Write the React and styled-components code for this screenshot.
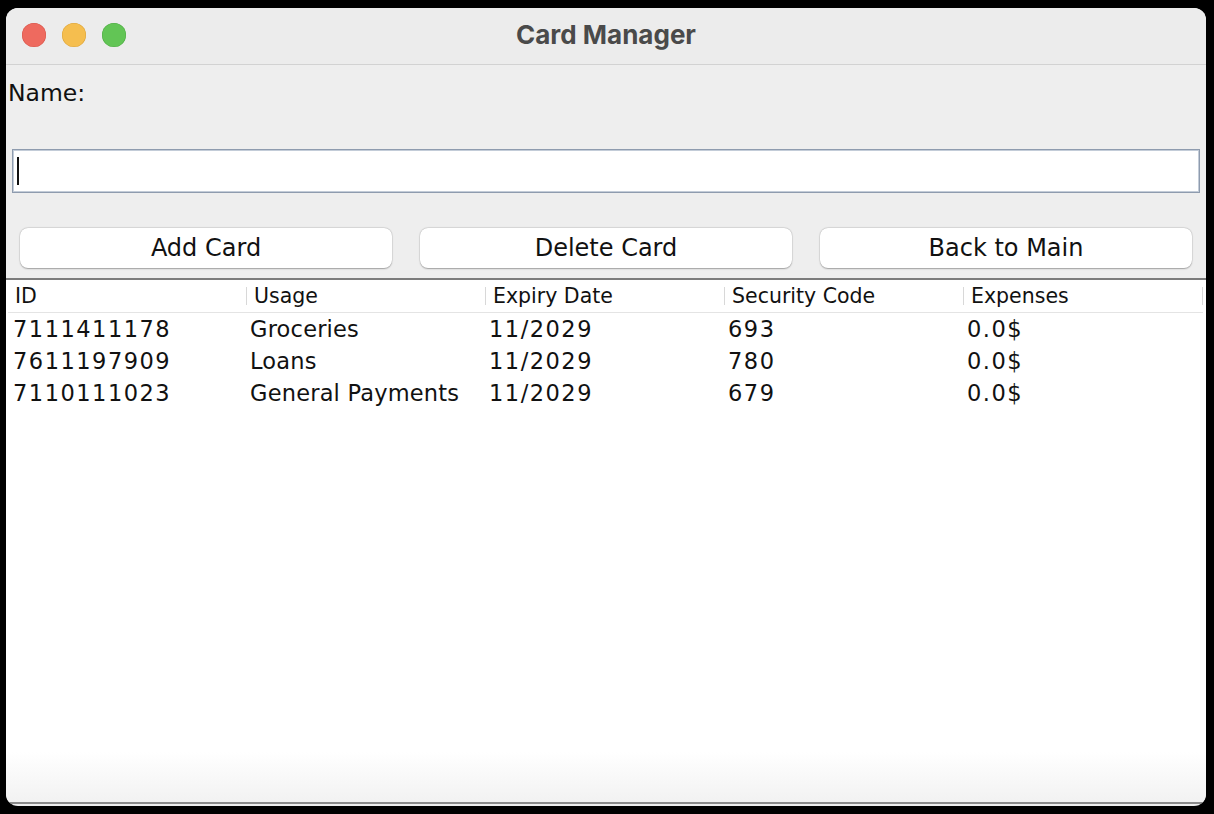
import React from 'react'
import styled, { createGlobalStyle } from 'styled-components'

const cards = [
  { id: '7111411178', usage: 'Groceries', expiry: '11/2029', code: '693', expenses: '0.0$' },
  { id: '7611197909', usage: 'Loans', expiry: '11/2029', code: '780', expenses: '0.0$' },
  { id: '7110111023', usage: 'General Payments', expiry: '11/2029', code: '679', expenses: '0.0$' },
]

const columns = ['ID', 'Usage', 'Expiry Date', 'Security Code', 'Expenses']

function App() {
  return (
    <>
      <Global />
      <Window>
        <TitleBar>
          <Lights>
            <Light color='#ee6a5f' edge='#d5554a' />
            <Light color='#f5be4f' edge='#d9a23a' />
            <Light color='#62c555' edge='#4ea943' />
          </Lights>
          <Title>Card Manager</Title>
          <span />
        </TitleBar>
        <Form>
          <Label>Name:</Label>
          <Field>
            <Caret />
          </Field>
          <Buttons>
            <Button>Add Card</Button>
            <Button>Delete Card</Button>
            <Button>Back to Main</Button>
          </Buttons>
        </Form>
        <Pane>
          <Table>
            <thead>
              <tr>
                {columns.map(c => (
                  <Head key={c}>{c}</Head>
                ))}
              </tr>
            </thead>
            <tbody>
              {cards.map(c => (
                <tr key={c.id}>
                  <Cell first numeric>{c.id}</Cell>
                  <Cell>{c.usage}</Cell>
                  <Cell numeric>{c.expiry}</Cell>
                  <Cell numeric>{c.code}</Cell>
                  <Cell numeric>{c.expenses}</Cell>
                </tr>
              ))}
            </tbody>
          </Table>
        </Pane>
      </Window>
    </>
  )
}

export default App

const Global = createGlobalStyle`
html, body {
  margin: 0;
  background: #000;
  font-family: "DejaVu Sans", "Liberation Sans", sans-serif;
}
`
const Window = styled.div`
margin: 8px 0 0 6px;
width: 1200px;
height: 798px;
border-radius: 12px;
overflow: hidden;
background: #eeeeee;
display: flex;
flex-direction: column;
`
const TitleBar = styled.div`
height: 56px;
flex-shrink: 0;
display: grid;
grid-template-columns: 1fr auto 1fr;
align-items: center;
background: #ececec;
border-bottom: 1px solid #d2d2d2;
`
const Lights = styled.div`
display: flex;
gap: 16px;
padding: 0 0 2px 16px;
`
const Light = styled.div`
width: 24px;
height: 24px;
border-radius: 50%;
background: ${p => p.color};
box-shadow: inset 0 0 0 0.5px ${p => p.edge};
`
const Title = styled.div`
font-family: Inter, "DejaVu Sans", sans-serif;
font-weight: 700;
font-size: 26px;
color: #4a4a4a;
padding-bottom: 3px;
`
const Form = styled.div`
display: flex;
flex-direction: column;
padding-top: 13px;
`
const Label = styled.div`
height: 30px;
line-height: 30px;
padding-left: 2px;
font-size: 23.5px;
color: #111;
`
const Field = styled.div`
margin: 41px 6px 0 6px;
height: 42px;
background: #fff;
border: 1px solid #8e9bae;
box-shadow: inset 0 0 0 1px #c3ccd8;
display: flex;
align-items: center;
padding-left: 4px;
`
const Caret = styled.div`
width: 2px;
height: 28px;
background: #111;
`
const Buttons = styled.div`
display: grid;
grid-template-columns: repeat(3, 1fr);
gap: 28px;
padding: 0 14px;
margin-top: 35px;
`
const Button = styled.div`
height: 40px;
box-sizing: border-box;
border-radius: 8px;
background: #fff;
box-shadow: 0 0.5px 1.5px rgba(0,0,0,0.3), 0 0 0 0.5px rgba(0,0,0,0.08);
display: flex;
align-items: center;
justify-content: center;
font-size: 24px;
color: #111;
`
const Pane = styled.div`
margin-top: 10px;
flex: 1;
border-top: 2px solid #7c7c7c;
border-bottom: 2px solid #8a8a8a;
margin-bottom: 2px;
padding: 0 2px;
background: linear-gradient(to bottom, #fff calc(100% - 50px), #f2f2f2);
`
const Table = styled.table`
width: 1195px;
table-layout: fixed;
border-collapse: collapse;
background: #fff;
`
const Head = styled.th`
box-sizing: border-box;
height: 32px;
padding: 1px 0 0 7px;
text-align: left;
font-weight: 400;
font-size: 20.5px;
color: #111;
border-bottom: 1px solid #e4e4e4;
background: linear-gradient(#d8d8d8, #d8d8d8) no-repeat right center / 1px 18px, #fff;
`
const Cell = styled.td`
height: 32px;
padding: 0 0 0 ${p => (p.first ? 5 : 3)}px;
font-size: 22.5px;
letter-spacing: ${p => (p.numeric ? '1.5px' : '0.2px')};
color: #111;
white-space: nowrap;
overflow: hidden;
`
